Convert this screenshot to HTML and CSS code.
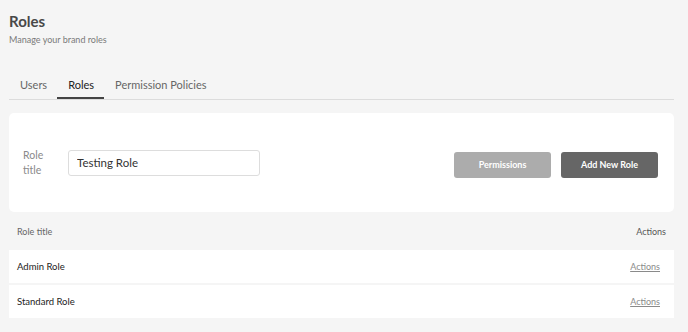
FILE: index.html
```html
<!DOCTYPE html>
<html lang="en">
<head>
  <meta charset="UTF-8" />
  <title>Roles</title>
  <link rel="stylesheet" href="styles.css">
</head>
<body>
  <div class="page">
    <div class="page-head">
      <h1>Roles</h1>
      <p>Manage your brand roles</p>
    </div>

    <div class="tabs">
      <a href="#">Users</a>
      <a href="#" class="active">Roles</a>
      <a href="#">Permission Policies</a>
    </div>

    <div class="role-card">
      <label class="role-label" for="roleTitle">Role<br>title</label>
      <input id="roleTitle" class="role-input" type="text" value="Testing Role" />
      <div class="card-actions">
        <button class="btn btn-light">Permissions</button>
        <button class="btn btn-dark">Add New Role</button>
      </div>
    </div>

    <div class="roles-table">
      <div class="table-head">
        <span>Role title</span>
        <span>Actions</span>
      </div>
      <div class="table-row">
        <span>Admin Role</span>
        <a href="#">Actions</a>
      </div>
      <div class="table-row">
        <span>Standard Role</span>
        <a href="#">Actions</a>
      </div>
    </div>
  </div>
</body>
</html>
```

FILE: styles.css
```css
* {
  box-sizing: border-box;
}

body {
  margin: 0;
  padding: 0;
  font-family: 'Lato', 'Liberation Sans', sans-serif;
  color: #333;
  background-color: #f5f5f5;
}

.page {
  width: 665px;
  margin-left: 9px;
  padding-top: 11px;
}

.page-head h1 {
  margin: 0;
  font-size: 15px;
  font-weight: 700;
  color: #484848;
  line-height: 20px;
}

.page-head p {
  margin: 2px 0 0;
  font-size: 9px;
  color: #7a7a7a;
  line-height: 14px;
}

.tabs {
  display: flex;
  margin-top: 29px;
  border-bottom: 1px solid #dcdcdc;
}

.tabs a {
  display: block;
  padding: 0 10px 0 11px;
  height: 23px;
  line-height: 17px;
  font-size: 11px;
  color: #666;
  text-decoration: none;
}

.tabs a.active {
  color: #222;
  border-bottom: 2px solid #444;
  margin-bottom: -1px;
}

.role-card {
  display: flex;
  align-items: center;
  margin-top: 13px;
  height: 99px;
  padding: 0 16px 0 14px;
  background-color: #fff;
  border-radius: 5px;
}

.role-label {
  width: 45px;
  font-size: 10.5px;
  line-height: 15px;
  color: #8a8a8a;
}

.role-input {
  width: 192px;
  height: 26px;
  padding: 0 8px;
  font-family: inherit;
  font-size: 11.5px;
  color: #333;
  border: 1px solid #ddd;
  border-radius: 3px;
  outline: none;
}

.card-actions {
  display: flex;
  gap: 10px;
  margin-left: auto;
  margin-top: 4px;
}

.btn {
  width: 97px;
  height: 26px;
  border: none;
  border-radius: 3px;
  font-family: inherit;
  font-size: 9px;
  font-weight: 700;
  color: #fff;
  cursor: pointer;
}

.btn-light {
  background-color: #acacac;
}

.btn-dark {
  background-color: #666;
}

.table-head {
  display: flex;
  justify-content: space-between;
  padding: 0 8px;
  height: 38px;
  align-items: center;
  font-size: 9px;
  color: #666;
}

.table-head span:last-child {
  color: #555;
}

.table-row {
  display: flex;
  justify-content: space-between;
  align-items: center;
  height: 33px;
  padding: 0 14px 0 8px;
  margin-bottom: 2px;
  background-color: #fff;
  font-size: 9.5px;
  color: #222;
}

.table-row a {
  font-size: 9px;
  color: #8a8a8a;
}
```
